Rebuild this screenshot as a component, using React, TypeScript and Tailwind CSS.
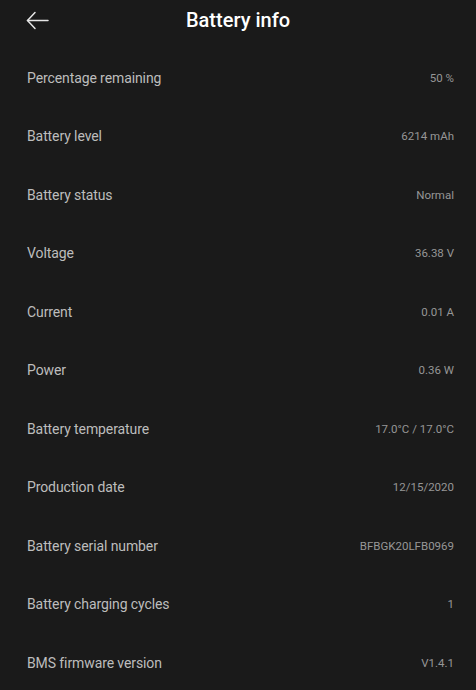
const rows: [string, string][] = [
  ['Percentage remaining', '50 %'],
  ['Battery level', '6214 mAh'],
  ['Battery status', 'Normal'],
  ['Voltage', '36.38 V'],
  ['Current', '0.01 A'],
  ['Power', '0.36 W'],
  ['Battery temperature', '17.0°C / 17.0°C'],
  ['Production date', '12/15/2020'],
  ['Battery serial number', 'BFBGK20LFB0969'],
  ['Battery charging cycles', '1'],
  ['BMS firmware version', 'V1.4.1'],
];

export default function App() {
  return (
    <div className="w-[476px] h-[690px] bg-[#1a1a1a] overflow-hidden" style={{ fontFamily: 'Roboto, "Noto Sans", sans-serif' }}>
      <div className="relative h-[49px] pb-[9px] flex items-center justify-center">
        <button className="absolute left-[25px] top-[11px] text-[#e6e6e6]">
          <svg width="24" height="20" viewBox="0 0 24 20" fill="none" stroke="currentColor" strokeWidth="1.5" strokeLinecap="round" strokeLinejoin="round">
            <path d="M23 9.5H2.5" />
            <path d="M10 1.5L2.5 9.5l7.5 8" />
          </svg>
        </button>
        <h1 className="text-[20px] font-medium text-white">Battery info</h1>
      </div>
      <div>
        {rows.map(([label, value]) => (
          <div key={label} className="h-[58.5px] flex items-center justify-between pl-[27px] pr-[22px]">
            <span className="text-[14px] tracking-[-0.1px] text-[#bdbdbd]">{label}</span>
            <span className="text-[11.5px] text-[#969696]">{value}</span>
          </div>
        ))}
      </div>
    </div>
  );
}
